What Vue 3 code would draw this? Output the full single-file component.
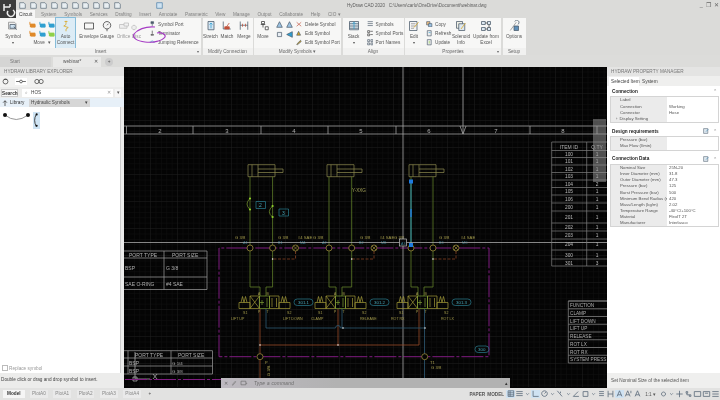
<script setup>
const c = { o: '#e08a2a', b: '#2f9fd0', g: '#8fd14a', d: '#4a5a6a', y: '#d8a520', r: '#c0503a', k: '#3a3a3a', s: '#8a8a8a', l: '#9cc4e4' }
const I = {
  symbol: [['M2 3h8l2 2v7H2z', '#eee', c.s], ['M4 6h7v5H4z', '#cfe3f2', c.d], ['M9 9l4 4', 'none', c.d]],
  auto: [['M8 1v5l-3 2 6 2-3 2v3', 'none', c.y], ['M6 2h4', 'none', c.y]],
  envelope: [['M2 4h12v8H2z', 'none', c.k]],
  gauge: [['M8 2a5 5 0 1 0 .01 0z', '#f4f4f4', c.k], ['M8 7l2-2M8 12v3', 'none', c.k]],
  orifice: [['M2 6h10v5H2z', '#eee', '#bbb'], ['M8 4h6v4H8z', '#f2f2f2', '#bbb']],
  disc: [['M4 7a3 3 0 1 0 .01 0z', '#eee', '#bbb']],
  stretch: [['M4 2h8v11H4z', '#d6e6f2', c.d], ['M8 4v7M6 6l2-2 2 2', 'none', c.b]],
  match: [['M3 2v10h10', 'none', c.d], ['M6 11l5-7', 'none', c.r], ['M5 9h6v3H5z', c.r, c.r]],
  merge: [['M3 2v11M13 2v11M3 7h10', 'none', c.d], ['M6 5v4M10 5v4', 'none', c.r]],
  move: [['M8 2v8M5 6h6', 'none', c.k], ['M6 2h4v3H6z', '#fff', c.k], ['M11 9h4v4h-4z', '#fff', c.k]],
  stack: [['M2 2h12v11H2z', '#dfe8ef', c.d], ['M2 5h12M2 8h12M2 11h12', 'none', c.d], ['M8 12V3M6 5l2-2 2 2', 'none', c.b]],
  edit: [['M2 2h10v12H2z', '#f4f4f4', c.d], ['M4 5h6M4 8h6M4 11h4', 'none', c.s], ['M8 10l6-7', 'none', c.y]],
  sol: [['M2 2h8v9H2z', '#f0f0e6', c.d], ['M5 5h8v9H5z', '#dfe8ef', c.d], ['M8 12l6-8', 'none', c.y]],
  excel: [['M2 2h5v4H2zM10 2h4v4h-4zM2 10h5v4H2zM10 10h4v4h-4z', '#dce8f2', c.d], ['M7 4h3M7 12h3M12 6v4', 'none', c.k]],
  options: [['M3 14L11 3', 'none', c.s], ['M9 2a3 3 0 1 1 4 4', 'none', c.d], ['M8 8h6v6H8z', '#5f8fb8', c.d]]
}
const mini = n => ({
  port: [['M3 1h4v3H3zM5 4v4', c.d, c.d]], term: [['M5 1v5M3 7h4v1H3z', 'none', c.k]], jump: [['M1 5h2a2 2 0 0 1 4 0h2', 'none', c.b]],
  del: [['M1 2l7 6M8 2L1 8', 'none', c.r]], es: [['M1 8l3-6 3 6z', c.y, c.d]], ep: [['M1 8l6-6 1 2-6 5z', c.y, c.d]],
  sy: [['M1 1h8M1 4h8M1 7h8', 'none', c.d]], sp: [['M1 1h3v3H1zM1 6h3v3H1zM5 2h4M5 7h4', 'none', c.k]], pn: [['M1 1h3v3H1zM6 1h3v3H6zM1 6h3v3H1zM6 6h3v3H6z', 'none', c.d]],
  copy: [['M1 1h5v5H1z', '#f0c080', c.d], ['M4 4h5v5H4z', c.l, c.d]], ref: [['M2 1h6v8H2z', '#eee', c.d], ['M4 4h3', 'none', c.b]], upd: [['M2 1h6v8H2z', '#eee', c.d], ['M5 3v4', 'none', c.g]],
  tri: [['M5 1l4 8H1z', c.l, c.d]], triL: [['M1 5l8-4v8z', c.b, c.d]], tri2: [['M2 2h6v6H2z', '#e8eef4', c.d]]
})[n]
const groups = [
  { name: 'Insert', w: 201, more: true, items: [
    { big: 'Symbol', w: 26, ic: I.symbol, caret: true }, { grid: true },
    { big: ['Auto', 'Connect'], w: 19, ic: I.auto, on: true }, { gap: 5 },
    { big: 'Envelope', w: 18, ic: I.envelope }, { big: 'Gauge', w: 18, ic: I.gauge },
    { big: 'Orifice', w: 15, ic: I.orifice, off: true }, { big: 'Disc', w: 11, ic: I.disc, off: true }, { gap: 7 },
    { list: [['Symbol Port', 'port'], ['Terminator', 'term'], ['Jumping Reference', 'jump']] }] },
  { name: 'Modify Connection', w: 50, items: [
    { big: 'Stretch', w: 16, ic: I.stretch }, { big: 'Match', w: 17, ic: I.match }, { big: 'Merge', w: 17, ic: I.merge }] },
  { name: 'Modify Symbols ▾', w: 87, items: [
    { big: 'Move', w: 18, ic: I.move }, { gap: 4 }, { pair: ['tri', 'tri', 'tri2', 'triL'] },
    { list: [['Delete Symbol', 'del'], ['Edit Symbol', 'es'], ['Edit Symbol Port', 'ep']] }] },
  { name: 'Align', w: 61, items: [
    { big: 'Stack', w: 22, ic: I.stack, caret: true }, { gap: 2 },
    { list: [['Symbols', 'sy'], ['Symbol Ports', 'sp'], ['Port Names', 'pn']] }] },
  { name: 'Properties', w: 96, more: true, items: [
    { big: 'Edit', w: 18, ic: I.edit, caret: true }, { gap: 3 }, { list: [['Copy', 'copy'], ['Refresh', 'ref'], ['Update', 'upd']], w: 25 },
    { big: ['Solenoid', 'Info'], w: 20, ic: I.sol }, { big: ['Update from', 'Excel'], w: 30, ic: I.excel }] },
  { name: 'Setup', w: 23, items: [{ big: 'Options', w: 23, ic: I.options }] }
]
const tabs = ['Circuit', 'System', 'Symbols', 'Services', 'Drafting', 'Insert', 'Annotate', 'Parametric', 'View', 'Manage', 'Output', 'Collaborate', 'Help', 'CIO ▾']
const moveCols = [c.o, c.b, c.b, c.o, c.b, c.g]
const sections = [
  { t: 'Connection', rows: [['Label', ''], ['Connection', 'Working'], ['Connector', 'Hose'], ['Display Setting', '', true]] },
  { t: 'Design requirements', tool: true, rows: [['Pressure (bar)', ''], ['Max Flow (l/min)', '']] },
  { t: 'Connection Data', tool: true, rows: [['Nominal Size', '25N-20'], ['Inner Diameter (mm)', '31.8'], ['Outer Diameter (mm)', '47.3'], ['Pressure (bar)', '125'], ['Burst Pressure (bar)', '500'], ['Minimum Bend Radius (m', '420'], ['Mass/Length (kg/m)', '2.02'], ['Temperature Range', '-40°C/+100°C'], ['Material', 'FlexIT 2T'], ['Manufacturer', 'Interlasco']] }
]
const rulerX = [126.5, 193, 261, 328, 396, 463, 530, 597]
const rulerN = [[160, 2], [227, 3], [294, 4], [361, 5], [429, 6], [496, 7], [563, 8]]
const bomLines = [143, 151.5, 158.5, 166, 173.5, 181, 188.5, 196, 204, 212, 224, 232, 240, 251, 260, 267]
const bom = [[155, 100, 1], [162, 101, 1], [170, 102, 1], [177, 103, 1], [185, 104, 2], [192.7, 105, 1], [200, 106, 1], [208, 200, 1], [218, 201, 1], [228, 202, 1], [236, 203, 1], [245.6, 204, 1], [256, 300, 1], [264, 301, 3]]
const fn = ['FUNCTION', 'CLAMP', 'LIFT DOWN', 'LIFT UP', 'RELEASE', 'ROT LX', 'ROT RX', 'SYSTEM PRESS']
const cyl = [{ x: 0, a: 250, b: 272.6, v: 260 }, { x: 79, a: 329, b: 351.7, v: 336 }, { x: 161, a: 411, b: 433, v: 418 }]
const ports = [250, 272.6, 329, 351.7, 411, 433]
const xports = [[295.5, 272.6], [374, 351.7], [456, 433]]
const portText = [[235, 'G 3/8'], [278, 'G 3/8'], [298, '#4 SAE'], [313, 'G 3/8'], [360, 'G 3/8'], [380, '#4 SAE'], [394, 'G 3/8'], [439, 'G 3/8'], [461, '#4 SAE']]
const portTag = [[243, 'A1'], [278, 'B1'], [300, 'MA'], [322, 'A2'], [359, 'B2'], [381, 'MB'], [439, 'B3'], [462, 'MC']]
const valves = [0, 76, 158]
const tags = [[294, '301.1'], [370, '301.2'], [452, '301.3']]
const vLabels = [[231, 'LIFT UP'], [283, 'LIFT DOWN'], [311, 'CLAMP'], [360, 'RELEASE'], [391, 'ROT RX'], [441, 'ROT LX']]
const sLabels = [[243, 'S1'], [287, 'S2'], [318, 'S1'], [362, 'S2'], [399, 'S1'], [444, 'S2']]
const plots = ['PlotA0', 'PlotA1', 'PlotA2', 'PlotA3', 'PlotA4']
const st = [
  ['M2 1h7v7H2zM2 3.5h7M2 6h7M4.500 1v7', 1], ['M1 2h8M1 4.500h8M1 7h8', 0], ['M3 4l2 2 2-2', 0, 7], ['M2 1v7h7', 1],
  ['M5 1a3.500 3.500 0 1 0 .01 0zM5 4.500l2-2', 0], ['M3 4l2 2 2-2', 0, 7], ['M1 1l6 7M5 2v2', 0], ['M3 4l2 2 2-2', 0, 7], ['M1 8l6-6M1 8h7', 0],
  ['M2 2h6v6H2z', 0], ['M3 4l2 2 2-2', 0, 7], ['M2 2h6M2 4.500h6M2 7h6', 0], ['M2 1v8M8 1v8M2 5h6', 0], ['M2 8l3-7 3 7M3 6h4', 1], ['M1 8l3-7 3 7M2 6h4M8 1v3', 0], ['M2 8l3-7 3 7M3 6h4', 0]
]
const st2 = [['M5 2.500a2.500 2.500 0 1 0 .01 0z', 0], ['M3 4l2 2 2-2', 0, 7], ['M5 1v8M1 5h8', 0], ['M2 2h2v2H2zM6 6h2v2H6zM3 4v2h3', 0], ['M1 2h8v6H1z', 0], ['M1 2h8v6H1zM3 4h4', 0], ['M1 2h8M1 5h8M1 8h8', 0]]
</script>

<template>
  <div class="app">
    <header class="head">
      <div class="logo">
        <svg viewBox="0 0 16 18"><path d="M4 4v7M4 7h6M10 4v3M8 11a3.500 3.500 0 1 0 5-1" fill="none" stroke="#eee" stroke-width="1.500" /></svg>
      </div>
      <div class="headcol">
        <div class="titlebar">
          <div class="qat">
            <svg v-for="n in 10" :key="n" viewBox="0 0 10 10"><path d="M1 1h6l2 2v6H1z" fill="#e8eef2" stroke="#5a6a78" /></svg>
          </div>
          <svg class="qat-x" viewBox="0 0 10 10"><path d="M1 1h8v8H1z" fill="#cfe3f2" stroke="#4a7ea8" /></svg>
          <span class="title">HyDraw CAD 2020 &nbsp; C:\Users\carlo\OneDrive\Documenti\webinar.dwg</span>
          <span class="winctl">_ &nbsp;❐ &nbsp;✕</span>
        </div>
        <nav class="rtabs">
          <span v-for="(t, i) in tabs" :key="t" class="rtab" :class="{ active: i === 0 }">{{ t }}</span>
        </nav>
      </div>
    </header>

    <section class="ribbon">
      <div v-for="g in groups" :key="g.name" class="group" :style="{ width: g.w + 'px' }">
        <div class="gbody">
          <template v-for="(it, k) in g.items" :key="k">
            <div v-if="it.gap" :style="{ width: it.gap + 'px' }"></div>
            <div v-else-if="it.big" class="tool" :class="{ on: it.on, off: it.off }" :style="{ width: it.w + 'px' }">
              <svg viewBox="0 0 16 16" class="bigic"><path v-for="(p, j) in it.ic" :key="j" :d="p[0]" :fill="p[1]" :stroke="p[2]" /></svg>
              <span v-for="l in [].concat(it.big)" :key="l" class="tl">{{ l }}</span>
              <span v-if="it.caret" class="tl caret">▾</span>
            </div>
            <div v-else-if="it.grid" class="movegrid">
              <div class="mgcells">
                <svg v-for="(col, j) in moveCols" :key="j" viewBox="0 0 8 8"><path d="M1 1v3h6v3H2" fill="none" :stroke="col" /><rect x="1" y="3" width="6" height="4" :fill="col" /></svg>
              </div>
              <span class="tl">Move &nbsp;▾</span>
            </div>
            <div v-else-if="it.pair" class="pair">
              <svg v-for="(n, j) in it.pair" :key="j" viewBox="0 0 10 10"><path v-for="(p, q) in mini(n)" :key="q" :d="p[0]" :fill="p[1]" :stroke="p[2]" /></svg>
            </div>
            <div v-else class="list" :style="it.w ? { width: it.w + 'px' } : null">
              <div v-for="r in it.list" :key="r[0]" class="lrow">
                <svg viewBox="0 0 10 10"><path v-for="(p, q) in mini(r[1])" :key="q" :d="p[0]" :fill="p[1]" :stroke="p[2]" /></svg>
                <span>{{ r[0] }}</span>
              </div>
            </div>
          </template>
        </div>
        <div class="glabel">{{ g.name }}<i v-if="g.more" class="gmore">▾</i></div>
      </div>
      <svg class="scribble" viewBox="0 0 36 20"><path d="M24 2C14 1 6 5 3 9c-2 4 3 7 11 8 8 1 17-1 20-5 1-3-4-5-8-4" fill="none" stroke="#a63cc4" stroke-width="1.200" /></svg>
    </section>

    <div class="doctabs">
      <span class="dtab">Start</span>
      <span class="dtab cur">webinar*<i>✕</i></span>
      <span class="dplus">+</span>
    </div>

    <main class="main">
      <aside class="lib">
        <div class="phead">HYDRAW LIBRARY EXPLORER</div>
        <div class="libtools">
          <svg viewBox="0 0 10 10"><circle cx="5" cy="5" r="3.500" fill="none" stroke="#333" /><path d="M3 2h4" stroke="#333" /></svg>
          <svg class="wide selbox" viewBox="0 0 14 10"><circle cx="7" cy="5" r="2" fill="none" stroke="#333" /><path d="M0 5h5M9 5h5" stroke="#333" /></svg>
          <svg class="wide" viewBox="0 0 14 10"><circle cx="4" cy="5" r="3" fill="none" stroke="#333" /><circle cx="10" cy="5" r="3" fill="none" stroke="#333" /></svg>
        </div>
        <div class="searchrow">
          <span class="slabel">Search</span>
          <div class="sinput"><i class="lens">⌕</i><span>HOS</span><i class="sx">✕</i></div>
          <span class="sdrop">▾</span>
        </div>
        <div class="librow">
          <svg viewBox="0 0 8 8"><path d="M4 8V1M1.500 3.500L4 1l2.500 2.500" fill="none" stroke="#333" /></svg>
          <span class="libname">Library</span>
          <span class="libsel">Hydraulic Symbols<i>▾</i></span>
        </div>
        <div class="libbody">
          <div class="syms">
            <svg class="sym1" viewBox="0 0 30 12"><path d="M4 3q11 9 23 0" fill="none" stroke="#999" /><circle cx="4" cy="3" r="2" fill="#111" /><circle cx="27" cy="3" r="2" fill="#111" /></svg>
            <svg class="sym2" viewBox="0 0 8 19"><path d="M4 2Q0 9 4 17" fill="none" stroke="#222" /><circle cx="4.500" cy="2" r="1.300" fill="#111" /><circle cx="4.500" cy="16" r="1.300" fill="#111" /></svg>
          </div>
          <label class="replace"><i class="check"></i>Replace symbol</label>
        </div>
        <div class="hint">Double click or drag and drop symbol to insert.</div>
      </aside>

      <div class="cadwrap">
        <svg class="cad" viewBox="124 68 483 320" font-family="Liberation Sans, sans-serif">
          <defs>
            <pattern id="minor" x="124" y="68" width="5.400" height="5.400" patternUnits="userSpaceOnUse"><path d="M5.400 0V5.400H0" fill="none" stroke="#151515" stroke-width=".6" /></pattern>
            <pattern id="major" x="124" y="68" width="27" height="27" patternUnits="userSpaceOnUse"><path d="M27 0V27H0" fill="none" stroke="#232323" stroke-width=".6" /></pattern>
          </defs>
          <rect x="124" y="68" width="483" height="320" fill="#040404" />
          <rect x="124" y="68" width="483" height="320" fill="url(#minor)" />
          <rect x="124" y="68" width="483" height="320" fill="url(#major)" />

          <!-- ruler -->
          <g stroke="#a0a0a0" stroke-width=".8" fill="none">
            <path d="M124 127H607M124 135H607" />
            <path v-for="x in rulerX" :key="x" :d="`M${x} 127V135`" />
            <path d="M460 127l3 8 3-8" />
          </g>
          <text v-for="r in rulerN" :key="r[1]" :x="r[0]" y="133.500" class="t" fill="#b0b0b0" font-size="6">{{ r[1] }}</text>

          <!-- port tables -->
          <g stroke="#8f8f8f" stroke-width=".8" fill="none">
            <path d="M124 252H207V290.500H124M124 259H207M124 278H207M164 252V290.500" />
            <path d="M124 351.700H212.500V375H124M124 359H212.500M124 367H212.500M171 351.700V375M128 351.700V375" />
          </g>
          <g fill="#b0b0b0" font-size="5">
            <text x="129" y="257.500">PORT TYPE</text><text x="172" y="257.500">PORT SIZE</text>
            <text x="125" y="270.500">BSP</text><text x="166" y="270.500">G 3/8</text>
            <text x="125" y="286.500">SAE O-RING</text><text x="166" y="286.500">#4 SAE</text>
            <text x="135" y="358">PORT TYPE</text><text x="178" y="358">PORT SIZE</text>
            <text x="129" y="365.500">BSP</text><text x="172" y="365.500" font-size="4.400">G 1/4</text>
            <text x="129" y="373.500">BSP</text><text x="172" y="373.500" font-size="4.400">G 3/8</text>
          </g>
          <g stroke="#bcbcbc" stroke-width=".7" fill="none">
            <path d="M135 353V380H150M133 378h4v4h-4z" /><path d="M153 375l4 5M157 375l-4 5" />
          </g>

          <!-- magenta boundary -->
          <g stroke="#7f1c80" stroke-width="1" fill="none" stroke-dasharray="22 2 3 2">
            <path d="M219 357.700V249H489V357.700H219" />
            <path d="M125 380.500H221" />
          </g>

          <!-- cylinders and their lines -->
          <g v-for="q in cyl" :key="q.x">
            <g :transform="`translate(${q.x} 0)`" stroke="#8f8d50" stroke-width=".7" fill="none">
              <path d="M248 165.700H275V177.700H248zM252 165.700V177.700M258 165.700V177.700" />
              <path d="M258 170H283V173.500H258" />
            </g>
            <path :d="`M${q.a} 177.700V288H${q.v}V297M${q.b} 177.700V288H${q.v + 6}V297`" stroke="#5f7d2a" stroke-width=".8" fill="none" />
          </g>
          <path d="M411 182.600V246" stroke="#2f8fa8" stroke-width="1.100" />
          <path d="M411 210V218" stroke="#1e7be0" stroke-width="1.300" />

          <!-- hose -->
          <path d="M250 199.500Q244 205 250 210.500M272.600 207Q266 213 272.600 218" fill="none" stroke="#6d8a2a" stroke-width=".8" />
          <g fill="#8fd12a"><circle cx="250" cy="199.500" r="1.100" /><circle cx="250" cy="210.500" r="1.100" /><circle cx="272.600" cy="207" r="1.100" /><circle cx="272.600" cy="218" r="1.100" /></g>
          <g stroke="#2a7e90" fill="none" stroke-width=".7"><path d="M256 202.500h9.500v7H256zM279 210h9.500v7H279z" /></g>
          <g fill="#48a8ba" font-size="5"><text x="259" y="208">2</text><text x="282" y="215.500">3</text></g>
          <text x="352" y="193" font-size="4.600" fill="#a3a057">Y-XXG</text>

          <!-- port row -->
          <path d="M295.500 252V260H272.600M374 252V260H351.700M456 252V260H433" fill="none" stroke="#9a4c2a" stroke-width=".7" stroke-dasharray="3 1.500" />
          <circle v-for="x in ports" :key="x" :cx="x" cy="249" r="3" fill="#040404" stroke="#97863a" stroke-width=".8" />
          <g v-for="x in xports" :key="x[0]">
            <circle :cx="x[0]" cy="249" r="3" fill="#040404" stroke="#97863a" stroke-width=".8" />
            <path :d="`M${x[0] - 2} 247l4 4M${x[0] + 2} 247l-4 4`" stroke="#97863a" stroke-width=".7" />
            <circle :cx="x[1]" cy="260" r=".8" fill="#eee" />
          </g>
          <text v-for="p in portText" :key="p[0]" :x="p[0]" y="239.500" font-size="4.200" fill="#a89f4e">{{ p[1] }}</text>
          <text v-for="p in portTag" :key="p[0]" :x="p[0]" y="245" font-size="3.600" fill="#357f94">{{ p[1] }}</text>

          <!-- crosshair -->
          <path d="M124 243.500H607M403 68V388M463 68V127" stroke="#a8a8a8" stroke-width=".8" fill="none" />
          <rect x="399.500" y="240" width="7" height="7" fill="#0a0a0a" stroke="#bcbcbc" stroke-width=".7" />
          <text x="401" y="245.500" font-size="3.600" fill="#357f94">A3</text>
          <rect x="409" y="180.500" width="4" height="4" fill="#1e7be0" />
          <rect x="409" y="244" width="4" height="4" fill="#1e7be0" />

          <!-- supply and return -->
          <path d="M260 310V388M260 346H419V310M338 310V346" fill="none" stroke="#9a4c2a" stroke-width=".8" />
          <path d="M266 310V329H335.500a2.500 2.500 0 0 1 5 0H424.500M342 310V329M424.500 310V388" fill="none" stroke="#2f5a75" stroke-width=".8" />
          <g fill="#eee"><circle cx="260" cy="346" r=".8" /><circle cx="338" cy="346" r=".8" /><circle cx="343" cy="329" r=".8" /><circle cx="425" cy="329" r=".8" /></g>
          <circle cx="260" cy="357.700" r="3" fill="#040404" stroke="#97863a" stroke-width=".8" />
          <circle cx="424.700" cy="357.700" r="3" fill="#040404" stroke="#97863a" stroke-width=".8" />
          <text x="430" y="364.500" font-size="4" fill="#a89f4e">T1</text>
          <text x="431" y="369.500" font-size="4.200" fill="#a89f4e">G 3/8</text>
          <text transform="translate(270 377) rotate(-90)" font-size="4.200" fill="#a89f4e">G 3/8</text>
          <text x="265" y="365" font-size="4" fill="#a89f4e">P</text>

          <!-- valves -->
          <g v-for="dx in valves" :key="dx" :transform="`translate(${dx} 0)`">
            <g stroke="#a29a38" stroke-width=".7" fill="none">
              <path d="M239 303.500h11v6h-11zM241 303.500l1.500-6 1.500 6 1.500-6 1.500 6" />
              <path d="M250 297h9.500v12.500H250zM250 297l9.500 12.500M259.500 297L250 309.500" />
              <path d="M269.500 297H279V309.500H269.500zM272 299v9M276.500 299v9" />
              <path d="M279 303.500h11v6h-11zM281 303.500l1.500-6 1.500 6 1.500-6 1.500 6" />
            </g>
            <path d="M259.500 297H269.500V309.500H259.500zM262 301v5M260 303.500h4M267 299v9" stroke="#7fa035" stroke-width=".7" fill="none" />
            <g font-size="3.400" fill="#a89f4e"><text x="258" y="295.500">A</text><text x="266.500" y="295.500">B</text><text x="258" y="314">P</text><text x="266.500" y="314">T</text></g>
          </g>
          <g v-for="t in tags" :key="t[0]">
            <rect :x="t[0]" y="300" width="19" height="6.500" rx="3.200" fill="none" stroke="#2a7e90" stroke-width=".7" />
            <text :x="t[0] + 4" y="305.200" font-size="4.400" fill="#48a8ba">{{ t[1] }}</text>
          </g>
          <rect x="475" y="347" width="14" height="6.500" rx="3.200" fill="none" stroke="#2a7e90" stroke-width=".7" />
          <text x="478" y="352.200" font-size="4.400" fill="#48a8ba">300</text>
          <text v-for="t in sLabels" :key="t[0]" :x="t[0]" y="314.500" font-size="3.600" fill="#a89f4e">{{ t[1] }}</text>
          <text v-for="t in vLabels" :key="t[0]" :x="t[0]" y="320.500" font-size="3.600" fill="#a89f4e">{{ t[1] }}</text>

          <!-- BOM -->
          <g stroke="#808080" stroke-width=".7" fill="none">
            <path v-for="y in bomLines" :key="y" :d="`M551.700 ${y}H607`" />
            <path d="M551.700 143V267M586.700 143V267" />
          </g>
          <text x="569" y="149.500" class="m" font-size="5" fill="#b0b0b0">ITEM ID</text>
          <text x="597" y="149.500" class="m" font-size="5" fill="#b0b0b0">Q.TY</text>
          <g v-for="b in bom" :key="b[1]" font-size="4.800" fill="#bcbcbc" class="m">
            <text x="569" :y="b[0] + 1.700">{{ b[1] }}</text>
            <text x="597" :y="b[0] + 1.700">{{ b[2] }}</text>
          </g>
          <rect x="593" y="120" width="13" height="63" fill="#9a9a9a" opacity=".5" />

          <!-- function table -->
          <g stroke="#808080" stroke-width=".8" fill="none">
            <path d="M607 302H568.300V364H607" />
            <path v-for="(f, i) in fn" :key="f" :d="`M568.300 ${302 + i * 7.750}H607`" />
          </g>
          <text v-for="(f, i) in fn" :key="f" x="570" :y="308 + i * 7.750" font-size="4.700" fill="#b0b0b0">{{ f }}</text>
        </svg>
        <div class="cmd">
          <i class="cx">✕</i>
          <svg viewBox="0 0 10 10"><path d="M2 8l5-6 1 1-5 6z" fill="none" stroke="#777" /></svg>
          <svg class="prompt" viewBox="0 0 12 10"><path d="M1 2h8v6H1z" fill="none" stroke="#666" /><path d="M10 4l1.500 1.500L10 7" fill="#666" /></svg>
          <span>Type a command</span>
          <i class="cup">▴</i>
        </div>
      </div>

      <aside class="prop">
        <div class="phead">HYDRAW PROPERTY MANAGER</div>
        <div class="ptabs"><span class="ptab cur">Selected Item</span><span class="ptab">System</span></div>
        <div class="pbody">
          <section v-for="s in sections" :key="s.t" class="psec">
            <div class="psh">
              <b>{{ s.t }}</b>
              <svg v-if="s.tool" viewBox="0 0 10 10"><path d="M1 1h7v8H1z" fill="#dfe8ef" stroke="#5a6a78" /><path d="M5 6l4-4" stroke="#2f7fb0" /></svg>
              <i>⌃</i>
            </div>
            <div class="ptable">
              <div v-for="r in s.rows" :key="r[0]" class="prow">
                <span class="pk" :class="{ tree: r[2] }">{{ r[0] }}</span><span class="pv">{{ r[1] }}</span>
              </div>
            </div>
          </section>
          <div class="pdesc">Set Nominal Size of the selected item</div>
        </div>
      </aside>
    </main>

    <footer class="foot">
      <div class="ltabs">
        <span class="ltab cur">Model</span>
        <span v-for="p in plots" :key="p" class="ltab">{{ p }}</span>
        <span class="ltab plus">+</span>
      </div>
      <div class="status">
        <span class="stext">PAPER</span><span class="stext">MODEL</span>
        <svg v-for="(s, i) in st" :key="i" :class="{ hl: s[1] }" :style="s[2] ? { width: s[2] + 'px' } : null" viewBox="0 0 10 10"><path :d="s[0]" fill="none" stroke="#5a6a7a" /></svg>
        <span class="stext ratio">1:1 ▾</span>
        <svg v-for="(s, i) in st2" :key="'b' + i" :style="s[2] ? { width: s[2] + 'px' } : null" viewBox="0 0 10 10"><path :d="s[0]" fill="none" stroke="#5a6a7a" /></svg>
      </div>
    </footer>
  </div>
</template>

<style scoped>
.app { position: relative; width: 720px; height: 400px; overflow: hidden; display: flex; flex-direction: column; background: #dbdbd9; font-family: "Liberation Sans", Arial, sans-serif; font-size: 4.700px; color: #555; filter: blur(.35px); }
i { font-style: normal; }
.head { display: flex; height: 18px; flex: none; }
.logo { width: 16px; background: #3b3b3b; }
.logo svg { width: 16px; height: 18px; display: block; }
.headcol { flex: 1; display: flex; flex-direction: column; }
.titlebar { height: 10px; display: flex; align-items: center; position: relative; }
.qat { display: flex; gap: 3.500px; padding-left: 3px; }
.qat svg { width: 7px; height: 7px; }
.qat-x { width: 7px; height: 7px; margin-left: 35px; }
.title { position: absolute; left: 331px; font-size: 4.500px; color: #5c5c5c; white-space: nowrap; }
.winctl { position: absolute; right: 1px; font-size: 5.500px; color: #666; white-space: nowrap; }
.rtabs { flex: 1; display: flex; gap: 3.600px; }
.rtab { padding: 1.500px 2px 0; line-height: 6.500px; color: #808080; white-space: nowrap; }
.rtab.active { background: #f6f6f6; color: #333; padding: 1.500px 3px 0; }

.ribbon { height: 37px; flex: none; display: flex; gap: 1.500px; position: relative; }
.group { flex: none; background: #f7f7f6; display: flex; flex-direction: column; }
.gbody { flex: 1; display: flex; min-height: 0; }
.glabel { height: 7px; line-height: 7px; text-align: center; background: #f1f1f0; position: relative; color: #666; white-space: nowrap; }
.gmore { position: absolute; right: 2px; top: 0; font-size: 4px; }
.tool { flex: none; display: flex; flex-direction: column; align-items: center; padding-top: 2px; overflow: visible; white-space: nowrap; box-sizing: border-box; }
.tool.on { background: #dcecf6; outline: .7px solid #86bcd9; outline-offset: -.7px; }
.tool.off { color: #999; }
.bigic { width: 12px; height: 12px; flex: none; margin-bottom: 2px; }
.tl { line-height: 5.800px; }
.caret { font-size: 4px; }
.movegrid { flex: none; width: 28px; margin-left: 2px; display: flex; flex-direction: column; align-items: center; padding-top: 3px; }
.mgcells { display: grid; grid-template-columns: repeat(3, 7px); gap: 2px 2.500px; margin-bottom: 3px; }
.mgcells svg { width: 7px; height: 7px; display: block; }
.pair { flex: none; width: 20px; display: grid; grid-template-columns: 8px 8px; gap: 3px 2px; padding-top: 2.500px; align-content: start; }
.pair svg { width: 7px; height: 7px; }
.list { flex: none; display: flex; flex-direction: column; padding-top: 1.500px; white-space: nowrap; }
.lrow { height: 9.300px; display: flex; align-items: center; gap: 2.500px; color: #555; }
.lrow svg { width: 6.500px; height: 6.500px; flex: none; }
.scribble { position: absolute; left: 131px; top: 7px; width: 36px; height: 20px; pointer-events: none; }

.doctabs { height: 12px; flex: none; display: flex; align-items: flex-end; gap: 2px; background: #dcdcda; }
.dtab { width: 51px; height: 10px; line-height: 10px; background: #d5d5d4; padding-left: 10px; box-sizing: border-box; color: #777; }
.dtab.cur { width: 48px; background: #e9e9e8; color: #555; position: relative; }
.dtab.cur i { position: absolute; right: 3px; }
.dplus { width: 8px; height: 8px; line-height: 8px; text-align: center; margin: 0 0 1px 2px; background: #ccc; border-radius: 50%; }

.main { flex: 1; display: flex; min-height: 0; }
.lib { width: 124px; flex: none; display: flex; flex-direction: column; background: #ececeb; }
.phead { height: 9px; line-height: 9px; padding-left: 4px; background: #e4e4e3; color: #777; white-space: nowrap; }
.libtools { height: 11px; display: flex; align-items: center; gap: 6px; padding-left: 2px; background: #f2f2f1; }
.libtools svg { width: 7px; height: 7px; }
.libtools .wide { width: 12px; }
.selbox { background: #fff; }
.searchrow { height: 11px; display: flex; align-items: center; gap: 2px; padding: 0 3px 0 1px; }
.slabel { width: 17px; height: 8px; line-height: 8px; text-align: center; font-weight: 700; background: #fafafa; border: .5px solid #ccc; box-sizing: border-box; color: #333; }
.sinput { flex: 1; height: 8px; background: #fff; margin-left: 2px; display: flex; align-items: center; position: relative; padding-left: 3px; color: #444; }
.lens { margin-right: 3px; color: #999; }
.sx { position: absolute; right: 2px; color: #999; }
.sdrop { width: 6px; height: 8px; line-height: 8px; text-align: center; background: #f6f6f6; }
.librow { height: 9px; display: flex; align-items: center; background: #e7f0f8; padding-left: 2px; }
.librow svg { width: 6px; height: 6px; margin-right: 2px; }
.libname { width: 19px; color: #333; }
.libsel { width: 61px; height: 8px; line-height: 8px; background: #d6d6d6; padding-left: 2px; box-sizing: border-box; position: relative; color: #444; }
.libsel i { position: absolute; right: 2px; }
.libbody { flex: 1; background: #fff; margin-right: 3px; display: flex; flex-direction: column; justify-content: space-between; border-right: .5px solid #ccc; }
.syms { display: flex; align-items: flex-start; padding-top: 5px; }
.sym1 { width: 30px; height: 12px; margin-left: 1px; }
.sym2 { width: 6.500px; height: 17px; margin-left: 2px; background: #cfe4f4; }
.replace { display: flex; align-items: center; gap: 1px; color: #999; padding: 0 0 2px 2px; }
.check { width: 4px; height: 4px; border: .5px solid #bbb; }
.hint { height: 15px; line-height: 14px; padding-left: 1px; color: #444; white-space: nowrap; }

.cadwrap { width: 483px; flex: none; position: relative; background: #040404; }
.cad { display: block; width: 483px; height: 320px; }
.t, .m { text-anchor: middle; }
.cmd { position: absolute; left: 97px; bottom: 0; width: 289px; height: 10px; background: linear-gradient(90deg, #bdb9c0, #b2b2b2 40%); display: flex; align-items: center; gap: 3px; padding-left: 3px; box-sizing: border-box; color: #6a6a6a; }
.cmd svg { width: 6px; height: 6px; }
.cmd .prompt { width: 8px; }
.cmd span { letter-spacing: .3px; font-style: italic; margin-left: 3px; }
.cup { position: absolute; right: 2px; color: #333; }

.prop { flex: 1; display: flex; flex-direction: column; background: #efefee; min-width: 0; }
.ptabs { height: 10px; display: flex; align-items: flex-end; gap: 1px; padding-left: 2px; }
.ptab { height: 9px; line-height: 9px; padding: 0 2px; white-space: nowrap; color: #444; }
.ptab.cur { background: #fff; width: 30px; box-sizing: border-box; }
.pbody { flex: 1; background: #fff; display: flex; flex-direction: column; min-height: 0; }
.psec { padding: 0 1px 0 3px; }
.psh { height: 10.400px; display: flex; align-items: center; padding-left: 2px; position: relative; }
.psh b { color: #222; }
.psh svg { position: absolute; right: 10px; width: 6px; height: 6px; }
.psh i { position: absolute; right: 2px; color: #888; font-size: 5px; }
.ptable { border: .5px solid #d4d4d4; margin-bottom: 3px; }
.prow { height: 6.150px; line-height: 6.150px; display: flex; white-space: nowrap; overflow: hidden; font-size: 4.300px; }
.pk { width: 56px; flex: none; padding-left: 9px; box-sizing: border-box; background: #ebebeb; color: #555; overflow: hidden; }
.pk.tree::before { content: "›"; margin-left: -4px; margin-right: 2px; }
.pv { padding-left: 2px; color: #555; }
.pdesc { margin-top: auto; height: 15px; line-height: 15px; padding-left: 4px; background: #efefee; color: #555; white-space: nowrap; }

.foot { height: 12px; flex: none; display: flex; justify-content: space-between; align-items: center; background: #e2e2e1; }
.ltabs { display: flex; gap: 5.500px; padding-left: 3px; }
.ltab { padding: 1px 2px; color: #888; background: #eaeaea; line-height: 6px; }
.ltab.cur { background: #f5f5f5; color: #333; font-weight: 700; padding: 1px 4px; }
.ltab.plus { background: none; color: #555; }
.status { display: flex; align-items: center; }
.stext { font-weight: 700; color: #555; margin-right: 2px; white-space: nowrap; }
.stext.ratio { font-weight: 400; margin: 0 3px; }
.status svg { width: 9px; height: 8px; flex: none; }
.status .hl { background: #cfe2f2; }
</style>
